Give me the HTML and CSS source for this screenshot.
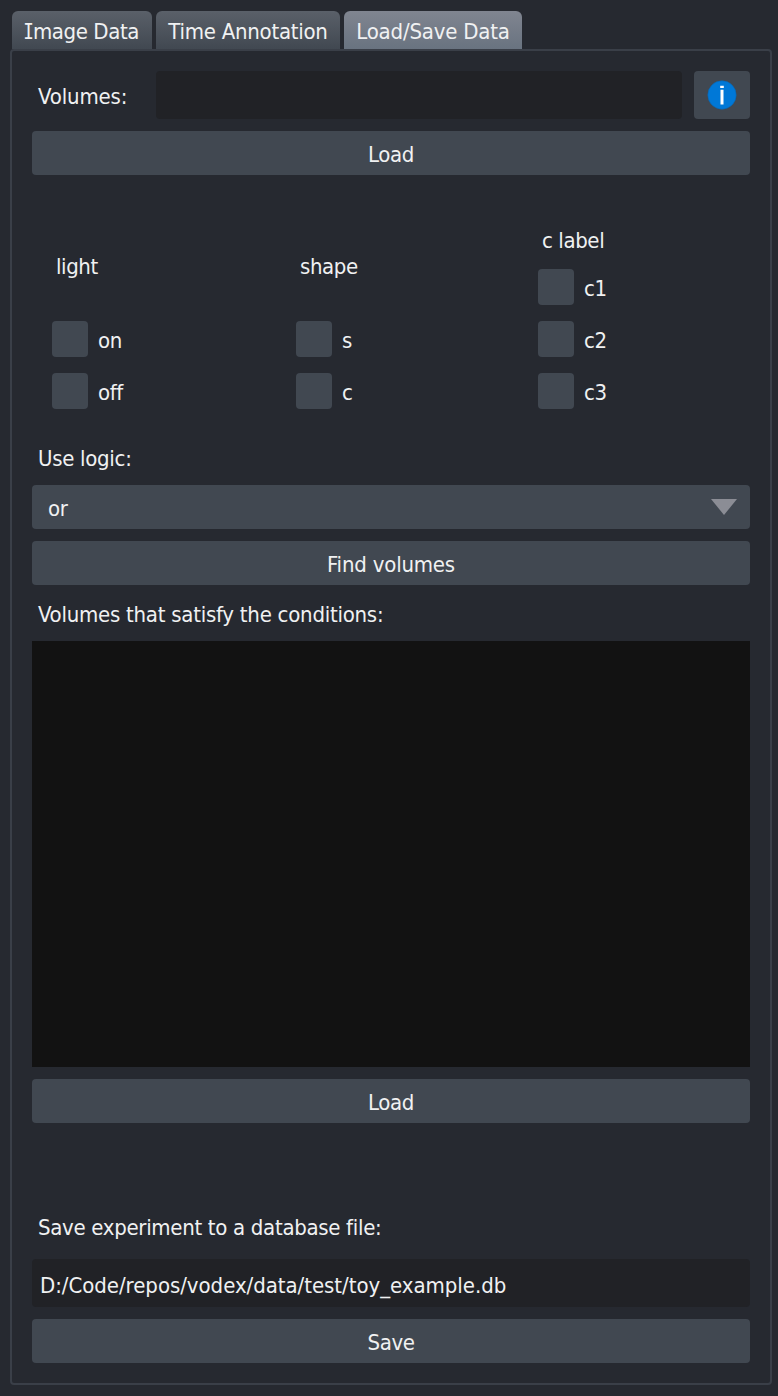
FILE: index.html
```html
<!DOCTYPE html>
<html lang="en">
<head>
<meta charset="utf-8">
<title>Load/Save Data</title>
<link rel="stylesheet" href="styles.css">
</head>
<body>
<div class="window">
  <nav class="tabs">
    <div class="tab tab-image"><span><span class="serif-i">I</span>mage Data</span></div>
    <div class="tab tab-time"><span>Time Annotation</span></div>
    <div class="tab tab-load active"><span>Load/Save Data</span></div>
  </nav>
  <main class="panel">
    <div class="volumes-row">
      <label class="label">Volumes:</label>
      <div class="field volumes-field"></div>
      <div class="button info">
        <svg width="30" height="30" viewBox="0 0 30 30"><circle cx="15" cy="15" r="14.2" fill="#0078d7" stroke="#0a64ae" stroke-width=".6"/><path d="M13.2 5.7h3.6v2.4h-3.6zM13.5 9.8h3v14.8h-3z" fill="#fff"/></svg>
      </div>
    </div>
    <div class="button"><span>Load</span></div>
    <div class="conditions">
      <div class="group">
        <div class="group-title tall">light</div>
        <div class="option"><i class="box"></i><span>on</span></div>
        <div class="option"><i class="box"></i><span>off</span></div>
      </div>
      <div class="group">
        <div class="group-title tall">shape</div>
        <div class="option"><i class="box"></i><span>s</span></div>
        <div class="option"><i class="box"></i><span>c</span></div>
      </div>
      <div class="group">
        <div class="group-title">c label</div>
        <div class="option"><i class="box"></i><span>c1</span></div>
        <div class="option"><i class="box"></i><span>c2</span></div>
        <div class="option"><i class="box"></i><span>c3</span></div>
      </div>
    </div>
    <div class="label line">Use logic:</div>
    <div class="button combo"><span>or</span>
      <svg width="26" height="16" viewBox="0 0 26 16"><path d="M0 0h26L13 16z" fill="#8b8d95"/></svg>
    </div>
    <div class="button find"><span>Find volumes</span></div>
    <div class="label line results-label">Volumes that satisfy the conditions:</div>
    <div class="list"></div>
    <div class="button"><span>Load</span></div>
    <div class="label save-label">Save experiment to a database file:</div>
    <div class="field path"><span>D:/Code/repos/vodex/data/test/toy_example.db</span></div>
    <div class="button save"><span>Save</span></div>
  </main>
</div>
</body>
</html>
```
FILE: styles.css
```css
* { box-sizing: border-box; }
body {
  margin: 0;
  background: #262930;
  color: #f0f1f2;
  font: 22px/26px "DejaVu Sans Condensed", "DejaVu Sans", sans-serif;
  font-stretch: condensed;
  letter-spacing: -0.4px;
  white-space: nowrap;
}
.window { height: 1396px; padding: 11px 6px 11px 10px; display: flex; flex-direction: column; }
.tabs { display: flex; gap: 4px; height: 38px; padding-left: 2px; }
.tab {
  display: flex; justify-content: center; padding-top: 8px;
  border-radius: 6px 6px 0 0;
  background: linear-gradient(#5a6069, #414851);
}
.tab.active { background: linear-gradient(#808590, #697380); }
.tab-image { width: 140px; }
.tab-time { width: 184px; letter-spacing: -0.26px; }
.tab-load { width: 178px; letter-spacing: -0.2px; }
.serif-i { display: inline-block; font-family: "DejaVu Sans Mono", monospace; transform: scaleX(.8); margin: 0 -2px 0 -3px; }
.panel {
  flex: 1; display: flex; flex-direction: column; gap: 12px;
  padding: 20px; border: 2px solid #3a3f48; border-radius: 4px;
}
.volumes-row { display: grid; grid-template-columns: 112px 1fr 56px; gap: 12px; height: 48px; align-items: center; }
.volumes-row > * { height: 48px; }
.label { padding-left: 6px; }
.volumes-row .label { padding-top: 13px; letter-spacing: -0.15px; }
.field { background: #212226; border-radius: 4px; height: 48px; }
.button { height: 44px; background: #414851; border-radius: 4px; display: flex; justify-content: center; align-items: center; padding-top: 4px; flex-shrink: 0; }
.volumes-row .info { height: 48px; padding: 0; }
.conditions { display: grid; grid-template-columns: 244px 242px 1fr; height: 242px; padding: 40px 20px 0; flex-shrink: 0; }
.group { display: flex; flex-direction: column; gap: 16px; }
.group-title { height: 26px; padding: 1px 0 0 4px; }
.group-title.tall { height: 78px; padding-top: 27px; }
.option { display: flex; gap: 10px; height: 36px; }
.option span { padding-top: 7px; }
.box { width: 36px; height: 36px; border-radius: 4px; background: #414851; }
.line { height: 32px; padding-top: 5px; flex-shrink: 0; letter-spacing: -0.3px; }
.results-label { letter-spacing: -0.25px; }
.combo { justify-content: space-between; align-items: flex-start; padding: 11px 13px 0 16px; }
.combo svg { margin-top: 3px; }
.find { letter-spacing: -0.2px; }
.list { height: 426px; background: #121212; flex-shrink: 0; }
.save-label { padding-top: 80px; height: 112px; flex-shrink: 0; letter-spacing: -0.31px; }
.path { padding: 14px 8px 0; flex-shrink: 0; letter-spacing: -0.04px; }
```
